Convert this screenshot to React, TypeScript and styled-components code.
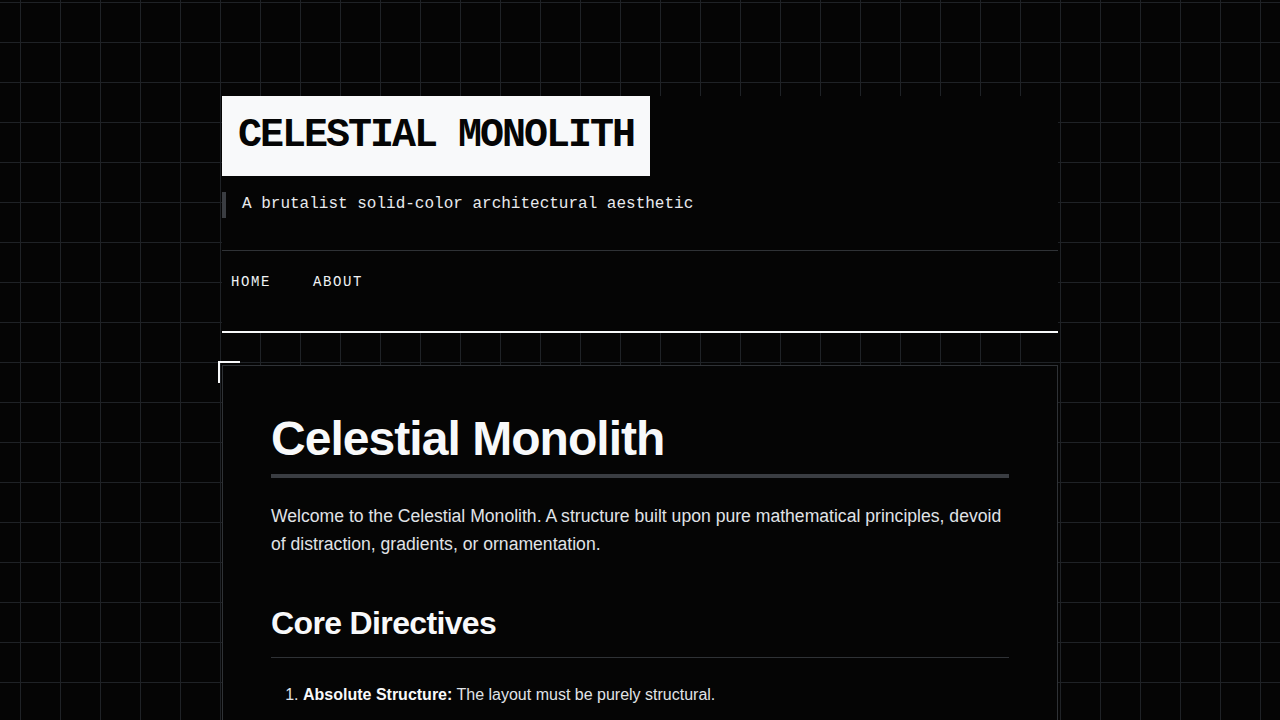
import React from 'react';
import styled, { createGlobalStyle } from 'styled-components';

const GlobalStyle = createGlobalStyle`
  * {
    box-sizing: border-box;
  }

  html,
  body {
    margin: 0;
    padding: 0;
  }

  body {
    background-color: #050505;
    background-image:
      linear-gradient(to right, #1f2226 1px, transparent 1px),
      linear-gradient(to bottom, #1f2226 1px, transparent 1px);
    background-size: 40px 40px;
    background-position: 20px 2px;
    color: #e0e0e0;
    font-family: 'Liberation Sans', Arial, sans-serif;
    min-height: 100vh;
  }
`;

function App() {
  return (
    <>
      <GlobalStyle />
      <Page>
        <SiteHeader>
          <SiteTitle>CELESTIAL MONOLITH</SiteTitle>
          <Tagline>A brutalist solid-color architectural aesthetic</Tagline>
          <Nav>
            <NavLink href='#'>HOME</NavLink>
            <NavLink href='#'>ABOUT</NavLink>
          </Nav>
        </SiteHeader>

        <Card>
          <Title>Celestial Monolith</Title>
          <Lead>
            Welcome to the Celestial Monolith. A structure built upon pure
            mathematical principles, devoid of distraction, gradients, or
            ornamentation.
          </Lead>
          <SectionTitle>Core Directives</SectionTitle>
          <DirectiveList>
            <li>
              <strong>Absolute Structure:</strong> The layout must be purely
              structural.
            </li>
            <li>
              <strong>Solid Color:</strong> Every surface is a single flat tone.
            </li>
            <li>
              <strong>Visible Grid:</strong> The underlying lattice stays exposed.
            </li>
          </DirectiveList>
        </Card>
      </Page>
    </>
  );
}

const Page = styled.div`
  width: 836px;
  margin: 0 auto;
  padding: 96px 0 64px;
`;

const SiteHeader = styled.header`
  background: #050505;
  border-bottom: 2px solid #f8f9fa;
`;

const SiteTitle = styled.div`
  display: inline-block;
  background: #f8f9fa;
  color: #050505;
  font-family: 'Liberation Mono', 'Courier New', monospace;
  font-weight: 700;
  font-size: 40px;
  line-height: 1.2;
  letter-spacing: -2px;
  padding: 16px;
`;

const Tagline = styled.p`
  margin: 16px 0 0;
  border-left: 4px solid #3a3d42;
  padding-left: 16px;
  font-family: 'Liberation Mono', 'Courier New', monospace;
  font-size: 16px;
  line-height: 1.6;
  color: #e8eaed;
`;

const Nav = styled.nav`
  display: flex;
  gap: 24px;
  margin-top: 32px;
  border-top: 1px solid #2f3236;
  padding: 13px 0 30px;
`;

const NavLink = styled.a`
  display: block;
  padding: 8px;
  border: 1px solid transparent;
  color: #f1f3f5;
  text-decoration: none;
  font-family: 'Liberation Mono', 'Courier New', monospace;
  font-size: 14px;
  line-height: 1.4;
  letter-spacing: 1.6px;
`;

const Card = styled.main`
  position: relative;
  margin-top: 32px;
  background: #050505;
  border: 1px solid #2f3236;
  padding: 48px;

  &::before {
    content: '';
    position: absolute;
    top: -5px;
    left: -5px;
    width: 20px;
    height: 20px;
    border-top: 2px solid #f8f9fa;
    border-left: 2px solid #f8f9fa;
  }
`;

const Title = styled.h1`
  margin: 1px 0 0;
  padding-bottom: 11px;
  border-bottom: 4px solid #3a3d42;
  color: #f8f9fa;
  font-size: 48px;
  line-height: 1;
  font-weight: 700;
  letter-spacing: -0.02em;
`;

const Lead = styled.p`
  margin: 24px 0 0;
  font-size: 17.6px;
  line-height: 1.6;
  color: #e0e3e7;
`;

const SectionTitle = styled.h2`
  margin: 46px 0 0;
  padding-bottom: 14px;
  border-bottom: 1px solid #2f3236;
  color: #f8f9fa;
  font-size: 32px;
  line-height: 1.2;
  font-weight: 700;
  letter-spacing: -0.02em;
`;

const DirectiveList = styled.ol`
  margin: 24px 0 0;
  padding-left: 32px;
  font-size: 16px;
  line-height: 1.6;
  color: #e0e3e7;

  li {
    margin-bottom: 12px;
  }

  strong {
    color: #f8f9fa;
  }
`;

export default App;
